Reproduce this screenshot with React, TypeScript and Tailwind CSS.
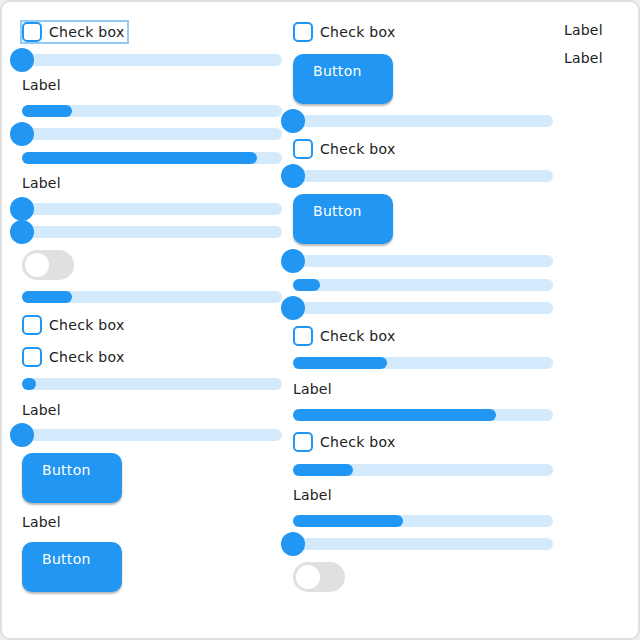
import React from 'react';

type Item =
  | { kind: 'checkbox'; focused?: boolean }
  | { kind: 'slider' }
  | { kind: 'bar'; fill: number }
  | { kind: 'label' }
  | { kind: 'switch' }
  | { kind: 'button' };

const items: Item[] = [
  // column 1
  { kind: 'checkbox', focused: true },
  { kind: 'slider' },
  { kind: 'label' },
  { kind: 'bar', fill: 50 },
  { kind: 'slider' },
  { kind: 'bar', fill: 235 },
  { kind: 'label' },
  { kind: 'slider' },
  { kind: 'slider' },
  { kind: 'switch' },
  { kind: 'bar', fill: 50 },
  { kind: 'checkbox' },
  { kind: 'checkbox' },
  { kind: 'bar', fill: 14 },
  { kind: 'label' },
  { kind: 'slider' },
  { kind: 'button' },
  { kind: 'label' },
  { kind: 'button' },
  // column 2
  { kind: 'checkbox' },
  { kind: 'button' },
  { kind: 'slider' },
  { kind: 'checkbox' },
  { kind: 'slider' },
  { kind: 'button' },
  { kind: 'slider' },
  { kind: 'bar', fill: 27 },
  { kind: 'slider' },
  { kind: 'checkbox' },
  { kind: 'bar', fill: 94 },
  { kind: 'label' },
  { kind: 'bar', fill: 203 },
  { kind: 'checkbox' },
  { kind: 'bar', fill: 60 },
  { kind: 'label' },
  { kind: 'bar', fill: 110 },
  { kind: 'slider' },
  { kind: 'switch' },
  // column 3
  { kind: 'label' },
  { kind: 'label' },
];

const Checkbox: React.FC<{ focused?: boolean }> = ({ focused }) => (
  <div
    className={`flex items-center gap-[7px] h-5 leading-4 ${
      focused ? 'outline-2 outline-[#90cbf9]' : ''
    }`}
  >
    <div className="w-5 h-5 rounded-[5px] border-2 border-[#2196f3] bg-white" />
    <span className="text-[14px] leading-4 tracking-[0.3px] text-[#212121] pr-[2px]">Check box</span>
  </div>
);

const Slider: React.FC = () => (
  <div className="relative w-[260px] h-3 rounded-full bg-[#d3eafd]">
    {/* knob sits on the left end, value 0 */}
    <div className="absolute -left-3 -top-[6px] w-6 h-6 rounded-full bg-[#2196f3]" />
  </div>
);

const Bar: React.FC<{ fill: number }> = ({ fill }) => (
  <div className="w-[260px] h-3 rounded-full bg-[#d3eafd]">
    <div className="h-3 rounded-full bg-[#2196f3]" style={{ width: fill }} />
  </div>
);

const Switch: React.FC = () => (
  <div className="w-[52px] h-[30px] rounded-full bg-[#e0e0e0] p-[3px]">
    <div className="w-6 h-6 rounded-full bg-white" />
  </div>
);

const Button: React.FC = () => (
  <div className="w-[100px] h-[50px] rounded-[10px] bg-[#2196f3] pl-5 pt-[9px] leading-4 shadow-[0_2px_2px_rgba(0,0,0,0.28)]">
    <span className="block text-[14px] leading-4 tracking-[0.3px] text-white">Button</span>
  </div>
);

const Label: React.FC = () => (
  <span className="block text-[14px] leading-4 h-4 tracking-[0.2px] text-[#212121]">Label</span>
);

const renderItem = (item: Item, i: number) => {
  switch (item.kind) {
    case 'checkbox':
      return <Checkbox key={i} focused={item.focused} />;
    case 'slider':
      return <Slider key={i} />;
    case 'bar':
      return <Bar key={i} fill={item.fill} />;
    case 'label':
      return <Label key={i} />;
    case 'switch':
      return <Switch key={i} />;
    default:
      return <Button key={i} />;
  }
};

export default function App() {
  return (
    <div
      className="w-[640px] h-[640px] bg-[#eeeeee]"
      style={{ fontFamily: '"DejaVu Sans", "Noto Sans", sans-serif' }}
    >
      <div className="w-[640px] h-[640px] bg-white border-2 border-[#e0e0e0] rounded-[10px] p-5">
        <div className="flex flex-col flex-wrap content-start items-start h-[596px] gap-y-[11.56px] gap-x-[11px]">
          {items.map(renderItem)}
        </div>
      </div>
    </div>
  );
}
